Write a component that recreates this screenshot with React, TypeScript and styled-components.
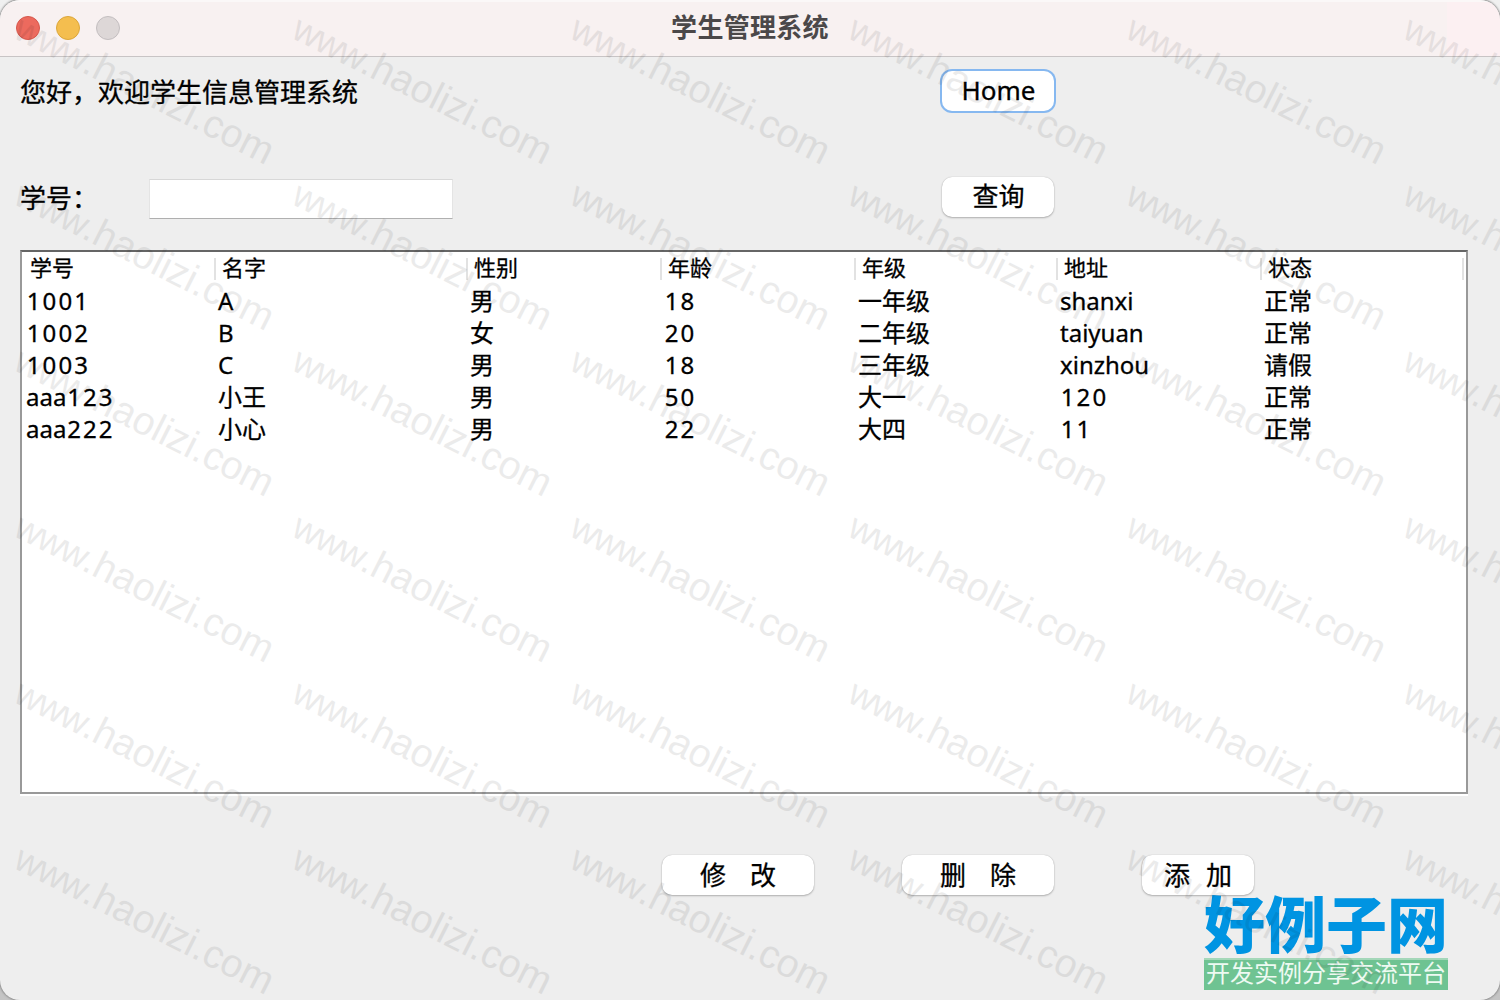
import React from "react";
import styled, { createGlobalStyle } from "styled-components";

const sans = `"Noto Sans", "Noto Sans CJK SC", sans-serif`;
const cjk = `"Noto Sans CJK SC", sans-serif`;

const GlobalStyle = createGlobalStyle`
  * { box-sizing: border-box; }
  body { margin: 0; background: linear-gradient(#f0f0f0, #c4c4c4); }
`;

const Window = styled.main`
  position: relative;
  display: flex;
  flex-direction: column;
  width: 1500px;
  height: 1000px;
  overflow: hidden;
  border-radius: 20px;
  background: #eeeeee;
  box-shadow: 0 0 2px 1px #8d8d8d;
  color: #000;
  font-family: ${sans};
  -webkit-text-stroke: 0.3px currentColor;
`;

const TitleBar = styled.header`
  display: grid;
  grid-template-columns: 1fr auto 1fr;
  align-items: center;
  height: 57px;
  flex: none;
  padding: 0 16px 2px;
  border-top: 2px solid #fbf8f8;
  border-bottom: 1px solid #c8c4c5;
  background: linear-gradient(90deg, #f8f1f1 1447px, #fcf0f2 1447px);
`;

const Lights = styled.div`
  display: flex;
  gap: 16px;
`;

const Light = styled.span<{ $fill: string; $edge: string }>`
  width: 24px;
  height: 24px;
  border-radius: 50%;
  border: 1px solid ${(p) => p.$edge};
  background: ${(p) => p.$fill};
`;

const Title = styled.h1`
  margin: 0;
  padding-bottom: 4px;
  font: 700 26px/36px ${cjk};
  letter-spacing: 0.3px;
  color: #4b4849;
  -webkit-text-stroke: 0;
`;

const Row = styled.div<{ $top: number; $height: number }>`
  display: grid;
  grid-template-columns: 129px 793px auto;
  justify-content: start;
  align-items: center;
  height: ${(p) => p.$height}px;
  margin-top: ${(p) => p.$top}px;
  padding-left: 20px;
  flex: none;
`;

const Label = styled.label<{ $wide?: boolean }>`
  grid-column: ${(p) => (p.$wide ? "span 2" : "auto")};
  padding-bottom: 3px;
  font: 400 26px/38px ${cjk};
  white-space: nowrap;
`;

const Field = styled.input`
  width: 304px;
  height: 40px;
  margin-top: 2px;
  padding: 0 6px;
  border: 1px solid #e4e4e4;
  border-top-color: #d8d8d8;
  border-bottom-color: #b0b0b0;
  border-radius: 0;
  outline: none;
  background: #fff;
  font: 24px ${sans};
`;

const Button = styled.button<{ $width: number; $focused?: boolean; $space?: number }>`
  display: flex;
  align-items: center;
  justify-content: center;
  width: ${(p) => p.$width}px;
  height: 40px;
  padding: 0 0 1px;
  border: 0;
  border-radius: 10px;
  background: #fff;
  color: #000;
  font: 400 26px/36px ${sans};
  word-spacing: ${(p) => p.$space ?? 0}px;
  white-space: pre;
  box-shadow: ${(p) =>
    p.$focused
      ? "0 0 0 2px #86b8f0"
      : "0 0 1px rgba(0,0,0,.25), 0 1px 2px rgba(0,0,0,.25)"};

  ${Row} > & {
    margin-bottom: 2px;
    padding-bottom: 2px;
    padding-left: 1px;
  }
`;

const TableFrame = styled.section`
  width: 1448px;
  height: 544px;
  margin: 32px 0 0 20px;
  flex: none;
  border: 2px solid #999;
  border-top-color: #666;
  background: #fff;
  box-shadow: 0 2px 0 #fff;
`;

const Grid = styled.div`
  display: grid;
  grid-template-columns: 192px 252px 194px 194px 202px 204px 202px;
  padding-left: 2px;
`;

const HeadCell = styled.div`
  height: 33px;
  padding-left: 6px;
  font: 400 22px/29px ${cjk};
  background: linear-gradient(#e2e2e2, #e2e2e2) right 0 top 6px / 2px 22px no-repeat;
`;

const Cell = styled.div`
  height: 32px;
  padding-left: 2px;
  font: 400 24px/32px ${sans};
  white-space: nowrap;
  overflow: hidden;
`;

const Digits = styled.span`
  margin-left: 0.8px;
  letter-spacing: 2.1px;
`;

const Actions = styled.footer`
  display: flex;
  margin: 61px 0 0 662px;
  gap: 88px;
`;

const Watermarks = styled.div`
  position: absolute;
  inset: 0;
  z-index: 3;
  display: grid;
  grid-template-columns: repeat(6, 277.9px);
  grid-auto-rows: 166.1px;
  padding: 4px 0 0 12px;
  overflow: hidden;
  pointer-events: none;
  -webkit-text-stroke: 0;
`;

const Mark = styled.span`
  width: 278px;
  color: #000;
  opacity: 0.075;
  font: 400 39.4px/38px "Liberation Sans", Arial, sans-serif;
  font-kerning: none;
  white-space: nowrap;
  transform-origin: 0 32.7px;
  transform: rotate(26.8deg);
`;

const Prefix = styled.span`
  font-size: 37px;
  letter-spacing: -1.2px;
`;

const Logo = styled.aside`
  position: absolute;
  left: 1204px;
  top: 891px;
  z-index: 2;
  width: 244px;
  -webkit-text-stroke: 0;
`;

const LogoName = styled.div`
  height: 67px;
  color: #0094e2;
  font: 900 61px/62px ${cjk};
  white-space: nowrap;
`;

const LogoSlogan = styled.div`
  height: 32px;
  border-top: 2px solid #a5d8b9;
  background: #6fc392;
  color: #eefaf2;
  font: 400 24px/24px ${cjk};
  text-align: center;
  white-space: nowrap;
`;

const columns = ["学号", "名字", "性别", "年龄", "年级", "地址", "状态"];
const students = [
  ["1001", "A", "男", "18", "一年级", "shanxi", "正常"],
  ["1002", "B", "女", "20", "二年级", "taiyuan", "正常"],
  ["1003", "C", "男", "18", "三年级", "xinzhou", "请假"],
  ["aaa123", "小王", "男", "50", "大一", "120", "正常"],
  ["aaa222", "小心", "男", "22", "大四", "11", "正常"],
];

function CellText({ value }: { value: string }) {
  const parts = value.split(/(\d+)/).filter(Boolean);
  return (
    <>
      {parts.map((part, i) =>
        /\d/.test(part) ? <Digits key={i}>{part}</Digits> : <span key={i}>{part}</span>
      )}
    </>
  );
}

export default function App() {
  return (
    <>
      <GlobalStyle />
      <Window>
        <TitleBar>
          <Lights>
            <Light $fill="#ec6a5e" $edge="#d5584d" />
            <Light $fill="#f4bf4f" $edge="#dba63c" />
            <Light $fill="#ddd7d8" $edge="#c3bebf" />
          </Lights>
          <Title>学生管理系统</Title>
        </TitleBar>
        <Row $top={14} $height={40}>
          <Label $wide>您好，欢迎学生信息管理系统</Label>
          <Button $width={112} $focused>Home</Button>
        </Row>
        <Row $top={66} $height={41}>
          <Label htmlFor="sid">学号：</Label>
          <Field id="sid" />
          <Button $width={112}>查询</Button>
        </Row>
        <TableFrame>
          <Grid>
            {columns.map((name) => (
              <HeadCell key={name}>{name}</HeadCell>
            ))}
            {students.map((student) =>
              student.map((value, i) => (
                <Cell key={student[0] + i}>
                  <CellText value={value} />
                </Cell>
              ))
            )}
          </Grid>
        </TableFrame>
        <Actions>
          <Button $width={152} $space={1.3}>{"修   改"}</Button>
          <Button $width={152} $space={1.3}>{"删   除"}</Button>
          <Button $width={112} $space={1.3}>{"添  加"}</Button>
        </Actions>
        <Logo>
          <LogoName>好例子网</LogoName>
          <LogoSlogan>开发实例分享交流平台</LogoSlogan>
        </Logo>
        <Watermarks aria-hidden>
          {Array.from({ length: 36 }, (_, i) => (
            <Mark key={i}>
              <Prefix>www</Prefix>.haolizi.com
            </Mark>
          ))}
        </Watermarks>
      </Window>
    </>
  );
}
